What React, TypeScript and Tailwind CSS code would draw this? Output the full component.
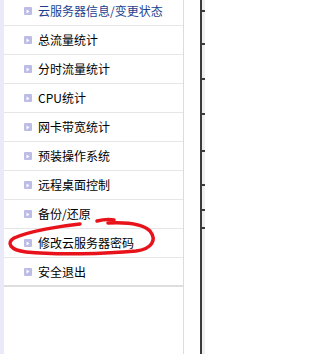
import React from "react";

const ITEMS = [
  "云服务器信息/变更状态",
  "总流量统计",
  "分时流量统计",
  "CPU统计",
  "网卡带宽统计",
  "预装操作系统",
  "远程桌面控制",
  "备份/还原",
  "修改云服务器密码",
  "安全退出",
];

// dark rule positions on the right-hand strip
const RULES = [10, 43, 78, 113, 150, 184, 209, 227];

function Bullet() {
  return (
    <span className="flex h-[8px] w-[8px] shrink-0 items-center justify-center rounded-[1px] bg-[#bcbce6]">
      <svg width="4" height="5" viewBox="0 0 4 5">
        <path d="M0.5 0.5 L3.5 2.5 L0.5 4.5 Z" fill="#ffffff" />
      </svg>
    </span>
  );
}

export default function App() {
  return (
    <div
      className="relative flex h-[354px] w-[205px] overflow-hidden bg-white text-[12px]"
      style={{ fontFamily: '"Noto Sans CJK SC", "Noto Sans", sans-serif' }}
    >
      <div className="w-[4px] shrink-0 bg-[#e9e9f7]" />

      <div className="w-[180px] shrink-0 border-r border-[#dcdcdc]">
        <ul className="-mt-[3px]">
          {ITEMS.map((label, i) => (
            <li
              key={label}
              className={
                "flex h-[29px] items-center gap-[6px] pl-[20px] " +
                (i === ITEMS.length - 1
                  ? "border-b-2 border-[#dedede]"
                  : "border-b border-[#e6e6e6]")
              }
            >
              <Bullet />
              <span
                className={
                  "leading-none " + (i === 0 ? "text-[#1d3f8e]" : "text-black")
                }
              >
                {label}
              </span>
            </li>
          ))}
        </ul>
      </div>

      <div className="w-[16px] shrink-0" />

      <div className="relative w-[5px] shrink-0 border-l-2 border-[#3a3a3a] bg-[#efefef]">
        {RULES.map((y) => (
          <div
            key={y}
            className="absolute left-0 right-0 h-[2px] bg-[#3a3a3a]"
            style={{ top: y }}
          />
        ))}
      </div>

      {/* red hand-drawn marker around the password item */}
      <svg
        className="pointer-events-none absolute left-0 top-0"
        width="205"
        height="354"
        viewBox="0 0 205 354"
      >
        <path
          d="M97 221 C103 219.5 109 219 114 220"
          fill="none"
          stroke="#e8121a"
          strokeWidth="3.5"
          strokeLinecap="round"
        />
        <path
          d="M80 224 C60 226 30 231 14 238 C6 243 10 250 26 252 C55 255 105 254 136 251 C152 249 157 240 150 231 C143 224 128 222 108 223"
          fill="none"
          stroke="#e8121a"
          strokeWidth="3.5"
          strokeLinecap="round"
        />
      </svg>
    </div>
  );
}
